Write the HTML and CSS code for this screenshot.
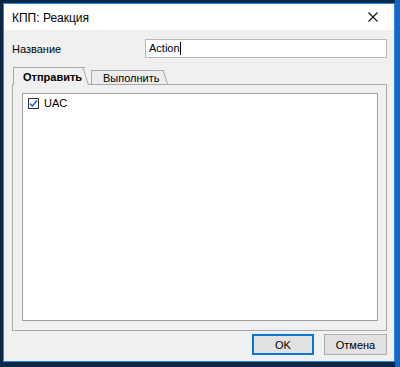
FILE: index.html
```html
<!DOCTYPE html>
<html lang="ru">
<head>
  <meta charset="UTF-8" />
  <title>КПП: Реакция</title>
  <link rel="stylesheet" href="styles.css">
</head>
<body>

  <div class="window">
    <div class="titlebar">
      <span class="title">КПП: Реакция</span>
      <button class="close-btn" title="Закрыть">
        <svg width="10" height="10" viewBox="0 0 10 10">
          <path d="M0.5 0.5 L9.5 9.5 M9.5 0.5 L0.5 9.5" stroke="#111" stroke-width="1.1" fill="none"/>
        </svg>
      </button>
    </div>

    <div class="dialog-body">
      <div class="name-row">
        <label for="name-input">Название</label>
        <div class="edit-box" id="name-input">Action<span class="caret"></span></div>
      </div>

      <div class="tabs">
        <div class="tab active">Отправить</div>
        <div class="tab">Выполнить</div>
      </div>

      <div class="tab-panel">
        <div class="list-box">
          <div class="check-row">
            <span class="checkbox">
              <svg width="9" height="9" viewBox="0 0 9 9">
                <path d="M1 4.6 L3.4 7 L8 1.6" stroke="#1f6fd0" stroke-width="1.6" fill="none"/>
              </svg>
            </span>
            <span>UAC</span>
          </div>
        </div>
      </div>

      <div class="buttons">
        <button class="btn default">OK</button>
        <button class="btn">Отмена</button>
      </div>
    </div>
  </div>

</body>
</html>
```

FILE: styles.css
```css
body {
  margin: 0;
  height: 367px;
  padding: 3px 0 0 3px;
  box-sizing: border-box;
  font-family: "Liberation Sans", Arial, sans-serif;
  font-size: 11px;
  color: #000;
  background: linear-gradient(to right, #0a2747 0, #0a2747 395px, #1667c4 395px);
}

.window {
  width: 392px;
  height: 359px;
  box-sizing: border-box;
  border: 1px solid #2b8ae0;
  display: flex;
  flex-direction: column;
  background: #f0f0f0;
}

.titlebar {
  height: 26px;
  background: #fff;
  display: flex;
  align-items: center;
  justify-content: space-between;
  padding: 0 0 0 8px;
}

.title {
  font-size: 12px;
  margin-top: 1px;
}

.close-btn {
  background: none;
  border: none;
  width: 30px;
  height: 26px;
  padding: 0;
  margin-right: 6px;
  display: flex;
  align-items: center;
  justify-content: center;
}

.dialog-body {
  flex: 1;
  display: flex;
  flex-direction: column;
  padding: 9px 7px 6px 8px;
}

.name-row {
  display: flex;
  align-items: center;
}

.name-row label {
  width: 133px;
}

.edit-box {
  flex: 1;
  height: 19px;
  box-sizing: border-box;
  border: 1px solid #b9b9b9;
  background: #fff;
  padding: 2px 0 0 3px;
  line-height: 13px;
}

.caret {
  display: inline-block;
  width: 1px;
  height: 13px;
  background: #000;
  vertical-align: top;
}

.tabs {
  display: flex;
  align-items: flex-end;
  margin: 9px 0 0 1px;
  height: 17px;
}

.tab {
  position: relative;
  z-index: 0;
  box-sizing: border-box;
  height: 14px;
  width: 73px;
  padding: 1px 0 0 11px;
  margin-left: 6px;
  border: 1px solid #a9a9a9;
  border-right: none;
  border-bottom: none;
  background: #ececec;
}

.tab::after {
  content: "";
  position: absolute;
  z-index: -1;
  top: -1px;
  right: -4px;
  bottom: 0;
  width: 5px;
  border-top: 1px solid #a9a9a9;
  border-right: 1px solid #a9a9a9;
  background: inherit;
  transform: skewX(18deg);
  transform-origin: bottom left;
}

.tab.active {
  width: 72px;
  height: 18px;
  margin-left: 0;
  margin-bottom: -1px;
  padding: 3px 0 0 9px;
  font-weight: bold;
  background: #f0f0f0;
  z-index: 1;
}

.tab-panel {
  flex: 1;
  border: 1px solid #a9a9a9;
  padding: 8px 8px 9px 9px;
  display: flex;
}

.list-box {
  flex: 1;
  background: #fff;
  border: 1px solid #a0a0a0;
  padding: 3px 5px;
}

.check-row {
  display: flex;
  align-items: center;
  gap: 5px;
}

.checkbox {
  width: 11px;
  height: 11px;
  box-sizing: border-box;
  border: 1px solid #333;
  background: #fff;
  display: flex;
  align-items: center;
  justify-content: center;
}

.buttons {
  display: flex;
  justify-content: flex-end;
  gap: 10px;
  margin-top: 3px;
}

.btn {
  height: 21px;
  width: 63px;
  font-family: "Liberation Sans", Arial, sans-serif;
  font-size: 11px;
  background: #e1e1e1;
  border: 1px solid #adadad;
  padding: 0;
}

.btn.default {
  border: 1px solid #0078d7;
  box-shadow: inset 0 0 0 1px #0078d7;
  width: 62px;
}
```
